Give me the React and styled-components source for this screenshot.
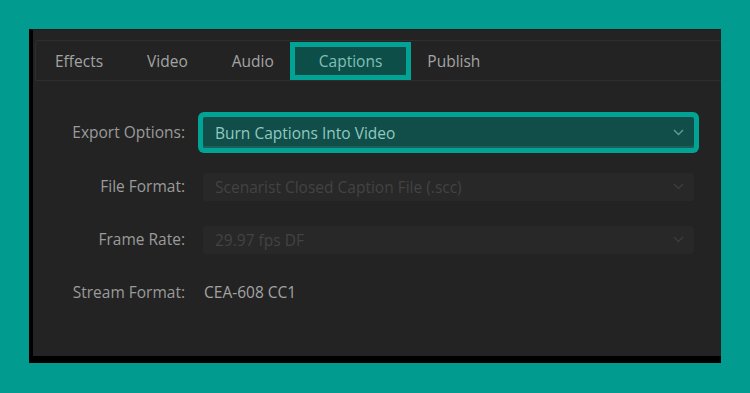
import styled, { createGlobalStyle } from "styled-components";

const GlobalStyle = createGlobalStyle`
  html, body {
    margin: 0;
    padding: 0;
    background: #019c8f;
  }
  body {
    font-family: "Open Sans", "Noto Sans", sans-serif;
  }
`;

const Frame = styled.div`
  width: 750px;
  height: 393px;
  box-sizing: border-box;
  padding: 29px 29px 30px 29px;
`;

const Panel = styled.div`
  width: 692px;
  height: 334px;
  box-sizing: border-box;
  background: #232323;
  border-left: 4px solid #000;
  border-bottom: 7px solid #000;
  border-top: 1px solid #1b1b1b;
  padding: 10px 0 0 2px;
`;

const TabBar = styled.div`
  display: flex;
  align-items: stretch;
  height: 41px;
  box-sizing: border-box;
  border-top: 1px solid #2e2e2e;
  border-bottom: 1px solid #2e2e2e;
  border-left: 1px solid #2e2e2e;
  border-top-left-radius: 3px;
`;

const Tab = styled.div`
  display: flex;
  align-items: center;
  padding: 0 ${(p) => (p.$active ? "24px" : "22px")};
  font-size: 15.5px;
  color: ${(p) => (p.$active ? "#80c0b7" : "#a3a3a3")};
  background: ${(p) => (p.$active ? "#0e4e49" : "transparent")};
  border: ${(p) => (p.$active ? "5px solid #00a394" : "none")};
  margin: ${(p) => (p.$active ? "1px -6px 0" : "0")};

  &:first-child {
    margin-left: -3px;
  }
`;

const Form = styled.div`
  display: grid;
  grid-template-columns: 150px 491px;
  column-gap: 18px;
  row-gap: 24px;
  margin-top: 36px;
  align-items: center;
`;

const Label = styled.div`
  text-align: right;
  font-size: 15.5px;
  color: #9b9b9b;
  line-height: 29px;
`;

const Select = styled.div`
  display: flex;
  align-items: center;
  justify-content: space-between;
  height: ${(p) => (p.$focused ? "31px" : "28px")};
  box-sizing: border-box;
  padding: 0 10px 0 12px;
  font-size: 15.5px;
  border-radius: ${(p) => (p.$focused ? "2px" : "3px")};
  background: ${(p) => (p.$focused ? "#114e49" : "#282828")};
  color: ${(p) => (p.$focused ? "#8fc9c0" : "#434343")};
  box-shadow: ${(p) =>
    p.$focused ? "0 0 0 5px #00a394, inset 0 -2px 0 #1c5f58" : "none"};
`;

const Value = styled.div`
  font-size: 15.5px;
  color: #a3a3a3;
  padding-left: 1px;
  line-height: 29px;
`;

const Chevron = ({ color }) => (
  <svg width="11" height="7" viewBox="0 0 11 7">
    <polyline
      points="1,1 5.5,5.5 10,1"
      fill="none"
      stroke={color}
      strokeWidth="1.4"
    />
  </svg>
);

const tabs = ["Effects", "Video", "Audio", "Captions", "Publish"];

export default function App() {
  return (
    <>
      <GlobalStyle />
      <Frame>
        <Panel>
          <TabBar>
            {tabs.map((t) => (
              <Tab key={t} $active={t === "Captions"}>
                {t}
              </Tab>
            ))}
          </TabBar>
          <Form>
            <Label>Export Options:</Label>
            <Select $focused>
              Burn Captions Into Video
              <Chevron color="#5f9e95" />
            </Select>
            <Label>File Format:</Label>
            <Select>
              Scenarist Closed Caption File (.scc)
              <Chevron color="#3c3c3c" />
            </Select>
            <Label>Frame Rate:</Label>
            <Select>
              29.97 fps DF
              <Chevron color="#3c3c3c" />
            </Select>
            <Label>Stream Format:</Label>
            <Value>CEA-608 CC1</Value>
          </Form>
        </Panel>
      </Frame>
    </>
  );
}
